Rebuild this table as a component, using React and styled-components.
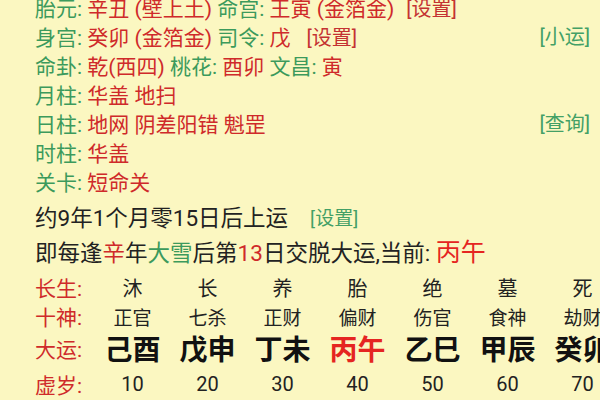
import styled, { createGlobalStyle } from "styled-components";

const GlobalStyle = createGlobalStyle`
  body {
    margin: 0;
    background: #fbf7c1;
    font-family: Roboto, "Noto Sans CJK SC", sans-serif;
  }
`;

const Page = styled.div`
  width: 600px;
  height: 400px;
  overflow: hidden;
  background: #fbf7c1;
  padding: 0 10px 0 35px;
  box-sizing: border-box;
`;

const InfoList = styled.div`
  margin-top: -8px;
`;

const Line = styled.div`
  display: flex;
  align-items: center;
  justify-content: ${(p) => (p.$start ? "flex-start" : "space-between")};
  height: ${(p) => p.$h || 29}px;
  margin-top: ${(p) => p.$mt || 0}px;
  font-size: ${(p) => p.$size || 21}px;
  white-space: pre;
  color: #222;
`;

const Label = styled.span`
  color: #3c9a5c;
`;

const Value = styled.span`
  color: ${(p) => (p.$bright ? "#e52521" : "#cf2a2a")};
  font-size: ${(p) => (p.$size ? `${p.$size}px` : "inherit")};
`;

const Link = styled.span`
  font-size: ${(p) => p.$size || 20}px;
  color: ${(p) => (p.$green ? "#43a066" : "#c43232")};
  margin-left: ${(p) => p.$gap || 0}px;
`;

const Table = styled.div`
  display: grid;
  grid-template-columns: 60px repeat(7, 75px);
  grid-template-rows: 30px 28px 36px 36px;
  margin-top: 5px;
  align-items: center;
`;

const RowLabel = styled.div`
  color: #cf2a2a;
  font-size: 21px;
`;

const Cell = styled.div`
  text-align: center;
  white-space: nowrap;
  font-size: ${(p) => p.$size || 20}px;
  font-weight: ${(p) => (p.$bold ? 700 : 400)};
  color: ${(p) => (p.$red ? "#e52521" : p.$bold ? "#111" : "#222")};
`;

const changSheng = ["沐", "长", "养", "胎", "绝", "墓", "死"];
const shiShen = ["正官", "七杀", "正财", "偏财", "伤官", "食神", "劫财"];
const daYun = ["己酉", "戊申", "丁未", "丙午", "乙巳", "甲辰", "癸卯"];
const xuSui = [10, 20, 30, 40, 50, 60, 70];

const App = () => {
  return (
    <Page>
      <GlobalStyle />
      <InfoList>
        <Line>
          <span>
            <Label>胎元: </Label>
            <Value>辛丑 (壁上土) </Value>
            <Label>命宫: </Label>
            <Value>王寅 (金箔金)</Value>
            <Link $gap={12}>[设置]</Link>
          </span>
        </Line>
        <Line>
          <span>
            <Label>身宫: </Label>
            <Value>癸卯 (金箔金) </Value>
            <Label>司令: </Label>
            <Value>戊</Value>
            <Link $gap={16}>[设置]</Link>
          </span>
          <Link $green>[小运]</Link>
        </Line>
        <Line>
          <span>
            <Label>命卦: </Label>
            <Value>乾(西四) </Value>
            <Label>桃花: </Label>
            <Value>酉卯 </Value>
            <Label>文昌: </Label>
            <Value>寅</Value>
          </span>
        </Line>
        <Line>
          <span>
            <Label>月柱: </Label>
            <Value>华盖 地扫</Value>
          </span>
        </Line>
        <Line>
          <span>
            <Label>日柱: </Label>
            <Value>地网 阴差阳错 魁罡</Value>
          </span>
          <Link $green>[查询]</Link>
        </Line>
        <Line>
          <span>
            <Label>时柱: </Label>
            <Value>华盖</Value>
          </span>
        </Line>
        <Line>
          <span>
            <Label>关卡: </Label>
            <Value>短命关</Value>
          </span>
        </Line>
      </InfoList>
      <Line $start $h={34} $size={22.5} $mt={4}>
        <span>约9年1个月零15日后上运</span>
        <Link $green $size={19} $gap={22}>[设置]</Link>
      </Line>
      <Line $start $h={34} $size={22.5}>
        <span>
          即每逢<Value>辛</Value>年<Label>大雪</Label>后第<Value>13</Value>日交脱大运,当前:{" "}
          <Value $bright $size={25}>丙午</Value>
        </span>
      </Line>
      <Table>
        <RowLabel>长生:</RowLabel>
        {changSheng.map((c) => (
          <Cell key={c}>{c}</Cell>
        ))}
        <RowLabel>十神:</RowLabel>
        {shiShen.map((c, i) => (
          <Cell key={i} $size={19}>{c}</Cell>
        ))}
        <RowLabel>大运:</RowLabel>
        {daYun.map((c) => (
          <Cell key={c} $bold $size={28} $red={c === "丙午"}>
            {c}
          </Cell>
        ))}
        <RowLabel>虚岁:</RowLabel>
        {xuSui.map((n) => (
          <Cell key={n}>{n}</Cell>
        ))}
      </Table>
    </Page>
  );
};

export default App;
